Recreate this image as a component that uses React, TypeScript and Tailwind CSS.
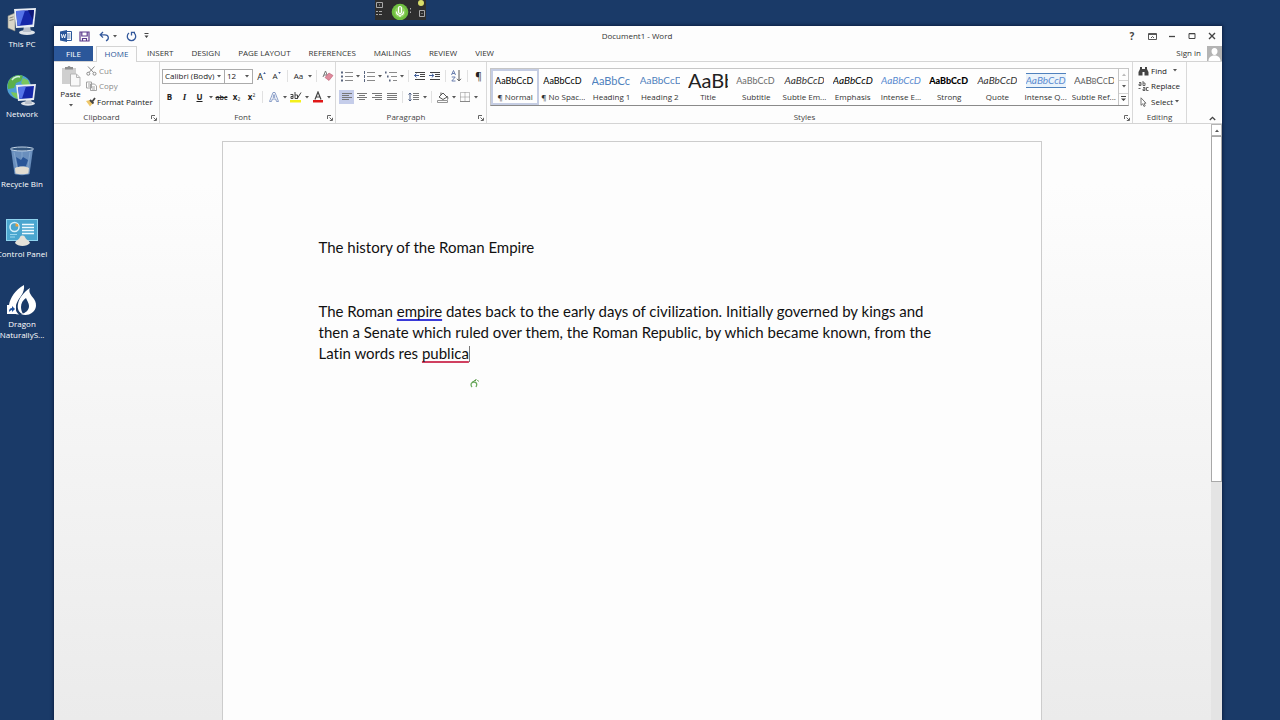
import type { ReactNode } from "react";

const INK = "#444444";

function Caret({ className = "" }: { className?: string }) {
  return (
    <svg viewBox="0 0 4 3" className={"h-[3px] w-1 shrink-0 fill-[#555555] " + className} aria-hidden="true">
      <path d="M0 0h4L2 2.6z" />
    </svg>
  );
}

function Tool({ label, children, active = false }: { label: string; children: ReactNode; active?: boolean }) {
  return (
    <button
      type="button"
      aria-label={label}
      className={
        "flex h-3.5 w-[15px] shrink-0 items-center justify-center leading-none " + (active ? "bg-[#c5cdea]" : "")
      }
    >
      {children}
    </button>
  );
}

function Drop({ label }: { label: string }) {
  return (
    <button type="button" aria-label={label} className="flex h-3.5 w-[7px] shrink-0 items-center justify-center">
      <Caret />
    </button>
  );
}

function Sep() {
  return <span className="mx-[3px] h-3 w-px shrink-0 bg-[#e1e1e1]" />;
}

function Group({
  name,
  launcher = true,
  className = "",
  children,
}: {
  name: string;
  launcher?: boolean;
  className?: string;
  children: ReactNode;
}) {
  return (
    <section aria-label={name} className={"flex flex-col border-r border-[#d9d9d9] " + className}>
      <div className="h-[50px]">{children}</div>
      <div className={"relative flex h-3 items-center justify-center text-[#444444] " + (launcher ? "pr-2.5" : "")}>
        <span>{name}</span>
        {launcher && (
          <button type="button" aria-label={name + " settings"} className="absolute right-0.5 top-1">
            <svg viewBox="0 0 6 6" className="size-1.5" fill="none" stroke="#666" strokeWidth="1">
              <path d="M.5 4V.5H4M2.500 2.500l2.500 2.500M5.500 2.800v2.700H2.800" />
            </svg>
          </button>
        )}
      </div>
    </section>
  );
}

function Lines({ rows }: { rows: [number, number][] }) {
  return (
    <svg viewBox="0 0 12 10" className="h-2.5 w-3" stroke="#777777" strokeWidth="1">
      {rows.map(([a, b], i) => (
        <path key={i} d={`M${a} ${i * 2 + 1.5}H${b}`} />
      ))}
    </svg>
  );
}

function ListIcon({ kind }: { kind: "bullet" | "number" | "multi" }) {
  const shift = kind === "multi" ? 2 : 0;
  return (
    <svg viewBox="0 0 12 11" className="h-[11px] w-3" stroke="#8a8a8a">
      {[0, 1, 2].map((i) => (
        <g key={i}>
          <path d={`M${4 + i * shift} ${i * 4 + 1.5}H${12}`} />
          <path
            d={
              kind === "bullet"
                ? `M0 ${i * 4 + 1.5}h2`
                : kind === "number"
                  ? `M1.5 ${i * 4}v3`
                  : `M${i * 2} ${i * 4 + 1.5}h1.6`
            }
            stroke="#5a6680"
            strokeWidth={kind === "number" ? 1 : 2}
          />
        </g>
      ))}
    </svg>
  );
}

function IndentIcon({ right = false }: { right?: boolean }) {
  return (
    <svg viewBox="0 0 12 10" className="h-2.5 w-3" stroke="#444444" fill="none">
      <path d="M1 1.500h10M6 3.500h5M6 5.500h5M1 8.500h10" />
      <path d={right ? "M0 4.500h4.500M2.800 2.600l2 1.900-2 1.900" : "M.5 4.500H5M2.500 2.600l-2 1.900 2 1.900"} stroke="#3e5c99" />
    </svg>
  );
}

function ThisPc() {
  return (
    <svg viewBox="0 0 32 32" className="size-8" aria-hidden="true">
      <path d="M2 12l7-3v18l-7-3z" fill="#d9d6c8" stroke="#8b8b83" strokeWidth=".6" />
      <path d="M3.500 14l4-1.200M3.500 16.500l4-1" stroke="#85857b" />
      <ellipse cx="21" cy="28.500" rx="8" ry="2.600" fill="#dfe3e8" />
      <path d="M18 22h6l1 6h-8z" fill="#b8bfca" />
      <path d="M8 5l22-1 -2 19-18 1z" fill="#e8edf4" />
      <path d="M10 7l18-1-1.500 14.500-15 1.500z" fill="#1527a8" />
      <path d="M10 7l9-.5-5 15-2.500.3z" fill="#5573e8" />
      <path d="M22 6.300l6-.3-1 10z" fill="#0c1673" />
    </svg>
  );
}

function NetworkIcon() {
  return (
    <svg viewBox="0 0 32 32" className="size-8" aria-hidden="true">
      <circle cx="13" cy="13" r="12" fill="#4f9fd4" />
      <path d="M4 5c4-4 10-5 13-3l-2 5-5 2-2 5-6 1C1 11 2 8 4 5z" fill="#5cb04a" />
      <path d="M17 4l5 2 2 5-5 2-4-4zM5 18l6 1 1 6c-4-1-6-4-7-7z" fill="#79c65d" />
      <path d="M6 6c2-3 6-4 8-3" stroke="#d4f0e4" strokeWidth="1.500" fill="none" />
      <ellipse cx="22" cy="29.500" rx="7" ry="2.200" fill="#dfe3e8" />
      <path d="M20 25h5l1 5h-7z" fill="#b8bfca" />
      <path d="M10 11l20-1-2 16-16 1z" fill="#e8edf4" />
      <path d="M12 13l16-1-1.500 12-13 1z" fill="#1527a8" />
      <path d="M12 13l8-.5-4 12-2.500.2z" fill="#5573e8" />
    </svg>
  );
}

function BinIcon() {
  return (
    <svg viewBox="0 0 32 32" className="size-8" aria-hidden="true">
      <path d="M5 5h22l-3.500 25c-3 1.500-12 1.500-15 0z" fill="#6a8fbd" />
      <path d="M8 8l4 21M24 8l-3 21M16 8v22" stroke="#88a9d0" strokeWidth=".8" />
      <path d="M10 13l5 3 2-3 5 3-2 6-8 1z" fill="#2a5698" />
      <path d="M9 24c4-2 10-2 14 0l-.6 5.600c-3 1-10 1-13 0z" fill="#e2ddd2" />
      <ellipse cx="16" cy="5" rx="11.500" ry="2" fill="#35577f" stroke="#c5d6e8" />
    </svg>
  );
}

function ControlPanelIcon() {
  return (
    <svg viewBox="0 0 32 32" className="size-8" aria-hidden="true">
      <path d="M0 5h32v22H0z" fill="#8fd3ee" />
      <path d="M1 6h30v20H1z" fill="#4aa6cf" />
      <circle cx="8.500" cy="13" r="4.500" fill="none" stroke="#d8f1fa" strokeWidth="1.500" />
      <path d="M9.500 12.500V9.500a3 3 0 0 1 3 3z" fill="#f0a030" />
      <path d="M16 10.500h12M16 13.500h12M16 16.500h12M16 19.500h12" stroke="#eefaff" strokeWidth="1.400" />
      <path d="M4 20.500h7M4 23h5" stroke="#9ad7ee" />
      <path d="M9 29c1-3 4-3 5-6 1-2 4-2 5 0 1 3 4 3 5 6-3 4-12 4-15 0z" fill="#e5e2d9" />
    </svg>
  );
}

function DragonIcon() {
  return (
    <svg viewBox="0 0 32 32" className="size-8" aria-hidden="true">
      <path d="M18 1C9 6 4 14 3 21c0 5 3 9 10 9.500-4-3-4-8-2-12 2-5 8-9 7-17.500z" fill="#fff" />
      <path
        d="M24 4c-2 4 1 7 4 11 4 6 2 13-5 15.500-3 .7-6 .5-8-.5 5-1 8-4 8-8 0-3-2-5-3-8-3 2-5 5-5 9 0 3 1 5 2 7-4-1-6-5-5-10 1-6 6-12 12-16z"
        fill="#fff"
      />
      <path d="M1 21h9v9H1z" fill="#fff" />
      <path d="M3 28c0-3 1-4 3-4v-2l3 3-3 3v-2c-1 0-2 1-3 2z" fill="#1d4f9c" />
    </svg>
  );
}

const shortcuts: { label: string[]; icon: ReactNode }[] = [
  { label: ["This PC"], icon: <ThisPc /> },
  { label: ["Network"], icon: <NetworkIcon /> },
  { label: ["Recycle Bin"], icon: <BinIcon /> },
  { label: ["Control Panel"], icon: <ControlPanelIcon /> },
  { label: ["Dragon", "NaturallyS..."], icon: <DragonIcon /> },
];

function Desktop() {
  return (
    <nav aria-label="Desktop" className="w-[54px] shrink-0 pt-1">
      {shortcuts.map((s) => (
        <a
          key={s.label[0]}
          href="#"
          className="flex h-[70px] w-11 flex-col items-center gap-0.5 text-[8px] leading-[11px] text-white"
        >
          {s.icon}
          <span className="flex flex-col items-center whitespace-nowrap">
            {s.label.map((line) => (
              <span key={line}>{line}</span>
            ))}
          </span>
        </a>
      ))}
    </nav>
  );
}

function TitleBar() {
  return (
    <header className="flex h-5 items-center text-[8px]">
      <div className="flex flex-1 items-center pl-1.5">
        <button type="button" aria-label="Word" className="w-[15px]">
          <svg viewBox="0 0 12 12" className="size-3">
            <path d="M6 1.500h5.500v9H6" fill="#fff" stroke="#2b579a" />
            <path d="M7 4h3.500M7 6h3.500M7 8h3.500" stroke="#2b579a" strokeWidth=".8" />
            <path d="M0 1.500L7 0v12L0 10.500z" fill="#2b579a" />
            <path d="M1.300 4l1 4 1.200-3.500L4.700 8l1-4" stroke="#fff" strokeWidth=".9" fill="none" />
          </svg>
        </button>
        <button type="button" aria-label="Save" className="ml-1 w-5">
          <svg viewBox="0 0 11 11" className="size-[11px]" fill="none" stroke="#5b3a8c" strokeWidth="1.200">
            <path d="M1 1h9v9H1zM2.800 1v4h5.400V1M3.500 10V7.500h4V10" />
          </svg>
        </button>
        <button type="button" aria-label="Undo" className="w-3">
          <svg viewBox="0 0 11 11" className="size-[11px]" fill="none" stroke="#34599c" strokeWidth="1.300">
            <path d="M4 1L1.200 3.800 4 6.600M1.500 3.800H6c4 0 4.500 4.500 1 6" />
          </svg>
        </button>
        <Drop label="Undo history" />
        <button type="button" aria-label="Redo" className="ml-2 w-[18px]">
          <svg viewBox="0 0 11 11" className="size-[11px]" fill="none" stroke="#34599c" strokeWidth="1.300">
            <path d="M3 2a4.200 4.200 0 1 0 5 0M5.500 4.500V1.300H9" />
          </svg>
        </button>
        <button type="button" aria-label="Customize toolbar">
          <svg viewBox="0 0 5 6" className="h-1.5 w-[5px]" fill="#444">
            <path d="M.5 0h4v1h-4zM.5 2.500h4L2.500 5z" />
          </svg>
        </button>
      </div>
      <h1 className="mr-2 text-[#333333]">Document1 - Word</h1>
      <div className="flex flex-1 items-center justify-end text-[#444444]">
        <button type="button" aria-label="Help" className="flex w-5 justify-center text-[10px] font-bold">
          ?
        </button>
        <button type="button" aria-label="Ribbon display options" className="flex w-5 justify-center">
          <svg viewBox="0 0 9 7" className="h-[7px] w-[9px]" fill="none" stroke={INK}>
            <path d="M.5.5h8v6h-8zM.5 1.500h8M3 5l1.500-1.500L6 5" strokeWidth=".9" />
          </svg>
        </button>
        <button type="button" aria-label="Minimize" className="flex w-5 justify-center">
          <svg viewBox="0 0 8 8" className="size-2" stroke={INK}>
            <path d="M1 4.500h6" strokeWidth="1.300" />
          </svg>
        </button>
        <button type="button" aria-label="Restore" className="flex w-5 justify-center">
          <svg viewBox="0 0 8 8" className="size-2" fill="none" stroke={INK}>
            <path d="M1 1.500h6v5H1zM1 1.800h6" />
          </svg>
        </button>
        <button type="button" aria-label="Close" className="flex w-5 justify-center">
          <svg viewBox="0 0 8 8" className="size-2" stroke={INK} strokeWidth="1.400">
            <path d="M1 1l6 6M7 1L1 7" />
          </svg>
        </button>
      </div>
    </header>
  );
}

const tabs = ["INSERT", "DESIGN", "PAGE LAYOUT", "REFERENCES", "MAILINGS", "REVIEW", "VIEW"];

function TabRow() {
  return (
    <div className="flex h-4 items-stretch border-b border-[#d4d4d4] text-[8px] text-[#333333]">
      <button type="button" className="mr-[3px] w-[39px] bg-[#2b579a] text-white">
        FILE
      </button>
      <button type="button" className="-mb-px mr-px w-[41px] border border-b-0 border-[#d4d4d4] bg-[#fdfdfd] pb-px text-[#2b579a]">
        HOME
      </button>
      {tabs.map((t) => (
        <button key={t} type="button" className="px-[9px] pb-px">
          {t}
        </button>
      ))}
      <a href="#" className="ml-auto flex items-center pb-px pr-1.5">
        Sign in
      </a>
      <svg viewBox="0 0 15 15" className="size-[15px]" aria-hidden="true">
        <path d="M0 0h15v15H0z" fill="#b4b4b4" />
        <path d="M7.500 2c2 0 3 1.300 3 3.200S9.400 9 7.500 9s-3-2-3-3.800S5.500 2 7.500 2zM1.500 15c0-4 3-5.500 6-5.500s6 1.500 6 5.500z" fill="#fff" />
      </svg>
    </div>
  );
}

function Clipboard() {
  return (
    <Group name="Clipboard" className="w-[106px]">
      <div className="flex pl-[3px] pt-px">
        <button type="button" className="flex w-[27px] flex-col items-center pt-0.5">
          <svg viewBox="0 0 20 22" className="h-[22px] w-5">
            <path d="M1 3h14v16H1z" fill="#cfcfcf" />
            <path d="M4 4.500V2h2.500a1.600 1.600 0 0 1 3 0H12v2.500z" fill="#8f8f8f" />
            <path d="M9.500 9h6l3.500 3.500V21H9.500z" fill="#f8f8f8" stroke="#b5b5b5" />
            <path d="M15.500 9v3.500H19" fill="none" stroke="#b5b5b5" />
          </svg>
          <span className="leading-[13px]">Paste</span>
          <Caret className="mt-1" />
        </button>
        <div className="flex flex-col items-start pl-0.5 leading-none">
          <button type="button" className="flex h-[15px] items-center gap-0.5 text-[#8a8a8a]">
            <svg viewBox="0 0 11 10" className="h-2.5 w-[11px]" fill="none" stroke="#8a8a8a">
              <path d="M2 .5l5.500 6M8.500.5L3 6.500" />
              <circle cx="2.300" cy="7.700" r="1.500" />
              <circle cx="8.500" cy="7.700" r="1.500" />
            </svg>
            Cut
          </button>
          <button type="button" className="flex h-4 items-center gap-0.5 text-[#8a8a8a]">
            <svg viewBox="0 0 11 10" className="h-2.5 w-[11px]" fill="#fff" stroke="#9a9a9a" strokeWidth=".9">
              <path d="M.5 1h5v6h-5zM4.500 3h4l2 2v4.500h-6zM6 6h3M6 8h3M2 3h2M2 5h2" />
            </svg>
            Copy
          </button>
          <button type="button" className="flex h-[15px] items-center whitespace-nowrap text-[#222222]">
            <svg viewBox="0 0 11 10" className="h-2.5 w-[11px]">
              <path d="M0 4l4 5.500 3-3.500-3-3z" fill="#efc76a" />
              <path d="M4 3l3.500 3.500M6 5l3-4" stroke="#444" strokeWidth="1.800" />
            </svg>
            Format Painter
          </button>
        </div>
      </div>
    </Group>
  );
}

function FontGroup() {
  return (
    <Group name="Font" className="w-[176px]">
      <div className="flex flex-col gap-[7px] pl-0.5 pt-[7px]">
        <div className="flex h-3.5 items-center">
          <div className="relative flex items-center">
            <select
              aria-label="Font family"
              className="h-[15px] w-[63px] appearance-none border border-[#ababab] bg-white pl-0.5 leading-none text-[#222222]"
            >
              <option>Calibri (Body)</option>
            </select>
            <Caret className="absolute right-1" />
          </div>
          <div className="relative -ml-px mr-px flex items-center">
            <select
              aria-label="Font size"
              className="h-[15px] w-[29px] appearance-none border border-[#ababab] bg-white pl-0.5 leading-none text-[#222222]"
            >
              <option>12</option>
            </select>
            <Caret className="absolute right-1" />
          </div>
          <Tool label="Grow font">
            <span className="text-[9px]">A</span>
            <svg viewBox="0 0 4 3" className="-mt-1.5 h-0.5 w-[3px] fill-[#3e5c99]">
              <path d="M0 3h4L2 0z" />
            </svg>
          </Tool>
          <Tool label="Shrink font">
            <span className="text-[8px]">A</span>
            <svg viewBox="0 0 4 3" className="-mt-1.5 h-0.5 w-[3px] fill-[#3e5c99]">
              <path d="M0 0h4L2 3z" />
            </svg>
          </Tool>
          <Sep />
          <Tool label="Change case">
            <span className="text-[8px]">Aa</span>
          </Tool>
          <Drop label="Case options" />
          <Sep />
          <Tool label="Clear formatting">
            <svg viewBox="0 0 12 12" className="size-3">
              <path d="M1 7l2.500-6L6 7M2 5h3" stroke="#777" fill="none" />
              <path d="M3 7.500L7 3l4 2.500-4 5z" fill="#e08a9c" stroke="#b95a70" strokeWidth=".6" />
            </svg>
          </Tool>
        </div>
        <div className="flex h-3.5 items-center">
          <Tool label="Bold">
            <b>B</b>
          </Tool>
          <Tool label="Italic">
            <i className="font-['Liberation_Serif',serif] text-[9px] font-bold">I</i>
          </Tool>
          <Tool label="Underline">
            <span className="font-bold underline">U</span>
          </Tool>
          <Drop label="Underline style" />
          <Tool label="Strikethrough">
            <span className="text-[7px] font-semibold line-through">abc</span>
          </Tool>
          <Tool label="Subscript">
            <span className="font-bold">x</span>
            <span className="mt-1 text-[5px]">2</span>
          </Tool>
          <Tool label="Superscript">
            <span className="font-bold">x</span>
            <span className="mb-1 text-[5px]">2</span>
          </Tool>
          <Sep />
          <Tool label="Text effects">
            <svg viewBox="0 0 10 10" className="size-2.5" fill="none" stroke="#7d93c2" strokeWidth=".9">
              <path d="M.5 9.500L4 .5h2l3.500 9h-2L6.700 7H3.300l-.8 2.500zM4 5.300h2L5 2.500z" />
            </svg>
          </Tool>
          <Drop label="Effect styles" />
          <Tool label="Highlight">
            <svg viewBox="0 0 12 12" className="size-3">
              <path d="M0 9h11v2.500H0z" fill="#f4f01c" />
              <path d="M.5 3.500h2.500v4H1V5.500h2M5 1v6.500h2.500V4H5M7 8l4-6.500" stroke="#444" fill="none" />
            </svg>
          </Tool>
          <Drop label="Highlight colors" />
          <Tool label="Font color">
            <svg viewBox="0 0 12 12" className="size-3">
              <path d="M1 9h10v2.500H1z" fill="#e01818" />
              <path d="M3 8.500L6 1l3 7.500M4 6h4" stroke="#444" strokeWidth="1.200" fill="none" />
            </svg>
          </Tool>
          <Drop label="Font colors" />
        </div>
      </div>
    </Group>
  );
}

function ParagraphGroup() {
  return (
    <Group name="Paragraph" className="w-[151px]">
      <div className="flex flex-col gap-[7px] pl-[3px] pt-[7px]">
        <div className="flex h-3.5 items-center">
          <Tool label="Bullets">
            <ListIcon kind="bullet" />
          </Tool>
          <Drop label="Bullet library" />
          <Tool label="Numbering">
            <ListIcon kind="number" />
          </Tool>
          <Drop label="Numbering library" />
          <Tool label="Multilevel list">
            <ListIcon kind="multi" />
          </Tool>
          <Drop label="List library" />
          <Sep />
          <Tool label="Decrease indent">
            <IndentIcon />
          </Tool>
          <Tool label="Increase indent">
            <IndentIcon right />
          </Tool>
          <Sep />
          <Tool label="Sort">
            <svg viewBox="0 0 11 12" className="h-3 w-[11px]" fill="none">
              <path d="M.5 5L2.500.5 4.500 5M1 3.500h3M.8 7h3.400L.8 11h3.700" stroke="#6a7fae" />
              <path d="M8 0v11M6 8.800l2 2 2-2" stroke="#555" />
            </svg>
          </Tool>
          <Sep />
          <Tool label="Show paragraph marks">
            <span className="text-[10px]">¶</span>
          </Tool>
        </div>
        <div className="flex h-3.5 items-center">
          <Tool label="Align left" active>
            <Lines rows={[[1, 11], [1, 8], [1, 11], [1, 8]]} />
          </Tool>
          <Tool label="Center">
            <Lines rows={[[1, 11], [3, 9], [1, 11], [3, 9]]} />
          </Tool>
          <Tool label="Align right">
            <Lines rows={[[1, 11], [4, 11], [1, 11], [4, 11]]} />
          </Tool>
          <Tool label="Justify">
            <Lines rows={[[1, 11], [1, 11], [1, 11], [1, 11]]} />
          </Tool>
          <Sep />
          <Tool label="Line spacing">
            <svg viewBox="0 0 12 10" className="h-2.5 w-3" fill="none" stroke="#777">
              <path d="M5 1.500h6M5 3.500h6M5 5.500h6M5 7.500h6" />
              <path d="M2 1v8M.5 2.500L2 1l1.500 1.500M.5 7.500L2 9l1.500-1.500" stroke="#4d5f86" />
            </svg>
          </Tool>
          <Drop label="Spacing options" />
          <Sep />
          <Tool label="Shading">
            <svg viewBox="0 0 12 11" className="h-[11px] w-3" fill="none" stroke="#555">
              <path d="M2 5l4-4 4 4-4 2.500zM10 4c1 1.500 1 2.500.5 3.500M4 3V.5" />
              <path d="M.5 8.500h10v2H.5z" stroke="#888" strokeWidth=".9" />
            </svg>
          </Tool>
          <Drop label="Shading colors" />
          <Tool label="Borders">
            <svg viewBox="0 0 10 10" className="size-2.5" fill="none" stroke="#888">
              <path d="M.5.5h9v9h-9zM5 .5v9M.5 5h9" strokeDasharray="1 1" />
              <path d="M0 9.500h10" />
            </svg>
          </Tool>
          <Drop label="Border options" />
        </div>
      </div>
    </Group>
  );
}

const styles: { name: string; sample: string; look: string }[] = [
  { name: "¶ Normal", sample: "AaBbCcD", look: "text-[9px] text-black" },
  { name: "¶ No Spac...", sample: "AaBbCcD", look: "text-[9px] text-black" },
  { name: "Heading 1", sample: "AaBbCc", look: "text-[11px] text-[#4f81bd]" },
  { name: "Heading 2", sample: "AaBbCcD", look: "text-[10px] text-[#4f81bd]" },
  { name: "Title", sample: "AaBb", look: "text-[20px] text-[#222222]" },
  { name: "Subtitle", sample: "AaBbCcD", look: "text-[9px] text-[#6a6a6a]" },
  { name: "Subtle Em...", sample: "AaBbCcD", look: "text-[10px] italic text-[#333333]" },
  { name: "Emphasis", sample: "AaBbCcD", look: "text-[10px] italic text-black" },
  { name: "Intense E...", sample: "AaBbCcD", look: "text-[10px] italic text-[#5b8bd0]" },
  { name: "Strong", sample: "AaBbCcD", look: "text-[9px] font-black text-black" },
  { name: "Quote", sample: "AaBbCcD", look: "text-[10px] italic text-[#333333]" },
  { name: "Intense Q...", sample: "AaBbCcD", look: "text-[10px] italic text-[#5b8bd0] border-y border-[#4f81bd] bg-[#eaf3fb]" },
  { name: "Subtle Ref...", sample: "AaBbCcD", look: "text-[10px] [font-variant:small-caps] text-[#5a5a5a]" },
];

function StylesGroup() {
  return (
    <Group name="Styles" className="min-w-0 flex-1">
      <div className="px-[3px] pt-1.5">
        <div className="flex h-[38px] border border-[#c6c6c6] border-b-[#8a8a8a] bg-[#fefefe]">
          <div className="grid min-w-0 flex-1 grid-cols-13">
            {styles.map((s, i) => (
              <button
                key={s.name}
                type="button"
                className={
                  "flex min-w-0 flex-col items-center overflow-hidden border-2 " +
                  (i === 0 ? "border-[#c5cde3]" : "border-transparent")
                }
              >
                <span className="flex h-5 w-10 items-center overflow-hidden pb-0.5 font-[Lato,sans-serif]">
                  <span className={"whitespace-nowrap leading-[13px] " + s.look}>{s.sample}</span>
                </span>
                <span className="whitespace-nowrap leading-[12px] text-[#333333]">{s.name}</span>
              </button>
            ))}
          </div>
          <div className="flex w-2.5 flex-col border-l border-[#c6c6c6]">
            <button type="button" aria-label="Previous row" className="flex flex-1 items-center justify-center border-b border-[#d4d4d4]">
              <Caret className="rotate-180 opacity-40" />
            </button>
            <button type="button" aria-label="Next row" className="flex flex-1 items-center justify-center border-b border-[#d4d4d4]">
              <Caret />
            </button>
            <button type="button" aria-label="More styles" className="flex flex-1 items-center justify-center">
              <svg viewBox="0 0 5 6" className="h-1.5 w-[5px]" fill="#444">
                <path d="M0 0h5v1H0zM0 2.500h5L2.500 5z" />
              </svg>
            </button>
          </div>
        </div>
      </div>
    </Group>
  );
}

function EditingGroup() {
  return (
    <Group name="Editing" launcher={false} className="w-[54px]">
      <div className="flex flex-col items-start pl-[5px] pt-px leading-none text-[#222222]">
        <button type="button" className="flex h-[15px] items-center gap-0.5">
          <svg viewBox="0 0 11 10" className="h-2.5 w-[11px]" fill="#444">
            <path d="M2 1h2v2h3V1h2v2l1.500 3v3.500H6.500V6h-2v3.500H.5V6L2 3z" />
          </svg>
          Find
          <Caret className="ml-1" />
        </button>
        <button type="button" className="flex h-4 items-center gap-0.5">
          <svg viewBox="0 0 11 10" className="h-2.5 w-[11px]" fill="none" stroke="#555" strokeWidth=".9">
            <path d="M1 1.500h2v3H1V3h2M5 0v4.500h2V2H5M.5 7.500h2M5 6.500h2v3H5V8h2M10.500 6.500h-2v3h2" />
          </svg>
          Replace
        </button>
        <button type="button" className="flex h-[15px] items-center gap-0.5">
          <svg viewBox="0 0 11 10" className="h-2.5 w-[11px]" fill="#fff" stroke="#666" strokeWidth=".9">
            <path d="M3 .8v7.500l1.700-1.500 1.300 2.700 1.200-.6L6 6.200h2z" />
          </svg>
          Select
          <Caret />
        </button>
      </div>
    </Group>
  );
}

function Document() {
  return (
    <div className="flex min-h-0 flex-1 bg-linear-to-b from-[#fdfdfd] from-10% to-[#ebebeb]">
      <div className="flex min-w-0 flex-1 justify-center overflow-hidden pt-[17px]">
        <main
          id="page"
          className="relative mr-0.5 w-[820px] border border-b-0 border-[#cccccc] bg-[#fdfdfd] px-24 pt-[95px] font-[Lato,sans-serif] text-[15px] leading-[21px] text-[#111111] [font-variant-ligatures:none]"
        >
          <p>The history of the Roman Empire</p>
          <p className="mt-[43px]">
            The Roman{" "}
            <span className="underline decoration-[#3a3ad8] decoration-2 underline-offset-2 [text-decoration-skip-ink:none]">
              empire
            </span>{" "}
            dates back to the early days of civilization. Initially governed by kings and then a Senate which ruled over
            them, the Roman Republic, by which became known, from the Latin words res{" "}
            <span className="underline decoration-[#d04060] decoration-2 underline-offset-2 [text-decoration-skip-ink:none]">
              publica
            </span>
            <span className="inline-block h-4 w-px bg-[#777777] align-text-bottom" />
          </p>
          <svg viewBox="0 0 9 10" className="absolute left-[247px] top-[236px] h-2.5 w-[9px]" fill="none" aria-hidden="true">
            <path d="M2 9C0 6.500 1.500 4 4 4s3.500 2 2 5" stroke="#6aa95c" strokeWidth="1.300" />
            <path d="M2 4.500l4-3M5 3l1.500-1.500M7.500 2l1 1.500" stroke="#5b9a4c" />
          </svg>
        </main>
      </div>
      <div
        className="flex w-[11px] flex-col bg-[#e4e4e4]"
        role="scrollbar"
        aria-label="Vertical scroll"
        aria-controls="page"
        aria-valuenow={0}
      >
        <button type="button" aria-label="Scroll up" className="flex h-3 items-center justify-center border border-[#b4b4b4] bg-white">
          <Caret className="rotate-180" />
        </button>
        <div className="h-[58%] border border-[#a8a8a8] bg-white" />
      </div>
    </div>
  );
}

function DictationBar() {
  return (
    <aside aria-label="Dictation" className="absolute left-[375px] top-0 flex h-5 w-[51px] bg-[#2e2e2e]">
      <svg viewBox="0 0 51 20" className="h-5 w-[51px]" fill="none">
        <path d="M1.500 2.500h6v5h-6zM4 5h1M1 11.500h2M4 11.500h3M1 14.500h2M4 14.500h3M44.500 10.500h5v6h-5zM46.500 13.500h1" stroke="#a8a8a8" />
        <circle cx="25" cy="12" r="8.300" fill="#6fbf40" />
        <circle cx="25" cy="12" r="5.500" fill="#8fd15e" />
        <path d="M23.500 8a1.500 1.500 0 0 1 3 0v4a1.500 1.500 0 0 1-3 0zM21.500 11.500c0 5 7 5 7 0M25 15.500V17" stroke="#fff" strokeWidth="1.200" />
        <path d="M35.500 8v1.500M35.500 11.500v1.500" stroke="#aaa" />
        <circle cx="46" cy="3" r="3" fill="#d9de6a" />
      </svg>
    </aside>
  );
}

export default function App() {
  return (
    <div className="relative flex h-screen overflow-hidden bg-[#1a3a68] font-['Open_Sans','Noto_Sans',sans-serif]">
      <Desktop />
      <div className="mr-[58px] mt-[26px] flex min-w-0 flex-1 flex-col bg-[#fdfdfd] shadow-[0_0_3px_1px_#0d2144]">
        <TitleBar />
        <TabRow />
        <div className="flex h-[62px] items-stretch border-b border-[#d4d4d4] text-[8px] text-[#222222]">
          <Clipboard />
          <FontGroup />
          <ParagraphGroup />
          <StylesGroup />
          <EditingGroup />
          <div className="flex w-[35px] items-end justify-end pb-0.5 pr-1.5">
            <button type="button" aria-label="Collapse ribbon">
              <svg viewBox="0 0 7 5" className="h-[5px] w-[7px]" fill="none" stroke={INK} strokeWidth="1.300">
                <path d="M.8 4l2.700-2.700L6.200 4" />
              </svg>
            </button>
          </div>
        </div>
        <Document />
      </div>
      <DictationBar />
    </div>
  );
}
